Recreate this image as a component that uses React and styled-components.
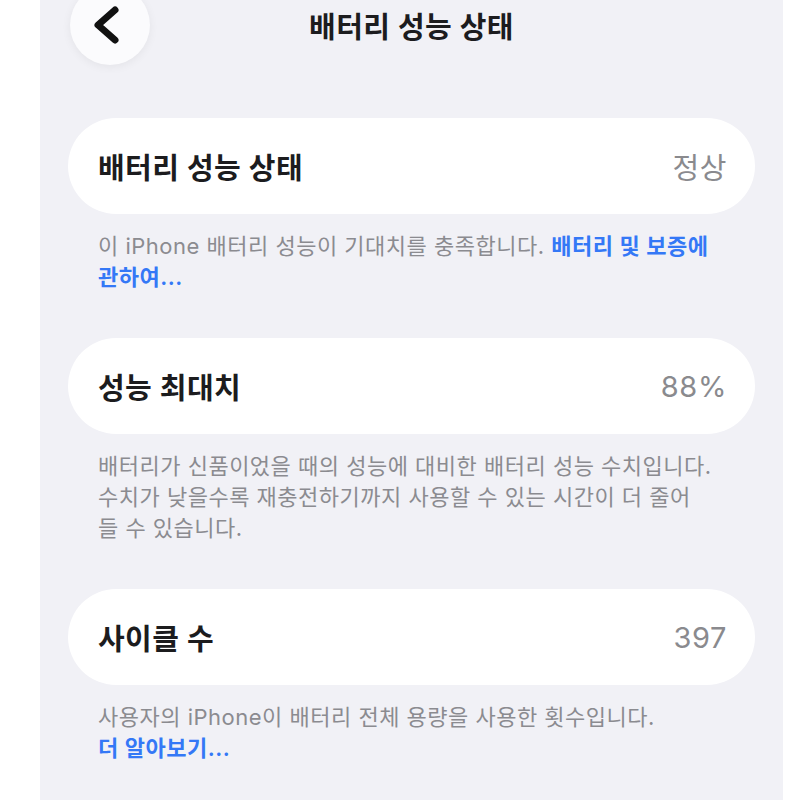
import React from 'react'
import styled, { createGlobalStyle } from 'styled-components'

const GlobalStyle = createGlobalStyle`
    html, body {
        margin: 0;
        padding: 0;
        background: #ffffff;
        overflow: hidden;
    }
    body {
        font-family: Inter, "Noto Sans CJK KR", sans-serif;
        -webkit-font-smoothing: antialiased;
    }
`

const Screen = styled.div`
    margin-left: 40px;
    width: 743px;
    height: 800px;
    background-color: #f1f1f6;
    overflow: hidden;
`

const NavBar = styled.header`
    margin-top: -15px;
    height: 80px;
    padding: 0 30px;
    display: grid;
    grid-template-columns: 1fr auto 1fr;
    align-items: center;
`

const BackButton = styled.button`
    width: 80px;
    height: 80px;
    border: none;
    border-radius: 50%;
    background-color: #fbfbfd;
    box-shadow: 0 2px 10px rgba(0, 0, 0, 0.06);
    padding: 0;
    display: block;
    cursor: pointer;
`

const NavTitle = styled.h1`
    margin: 0;
    font-size: 29px;
    font-weight: 700;
    color: #1c1c1e;
    letter-spacing: 0.5px;
`

const List = styled.main`
    padding: 53px 28px 0;
`

const Section = styled.section`
    margin-bottom: 45px;
`

const Row = styled.div`
    height: 96px;
    padding: 0 28px 0 30px;
    border-radius: 48px;
    background-color: #ffffff;
    display: flex;
    align-items: center;
    justify-content: space-between;
`

const Label = styled.span`
    font-size: 29px;
    font-weight: 600;
    color: #1c1c1e;
    letter-spacing: 0.4px;
`

const Value = styled.span`
    font-size: 29px;
    font-weight: 400;
    color: #8a8a8e;
    letter-spacing: 0.6px;
`

const Footnote = styled.p`
    margin: 0;
    padding: 17px 30px 0;
    font-size: 22px;
    line-height: 31px;
    color: #8b8b90;
    letter-spacing: 0.5px;
    white-space: nowrap;
`

const Link = styled.a`
    color: #3478f6;
    font-weight: 600;
    text-decoration: none;
`

// chevron drawn in the button's own 80x80 box
const ChevronLeft = () => (
    <svg width="80" height="80" viewBox="0 0 80 80">
        <path
            d="M45 25 L28 40 L45 55"
            fill="none"
            stroke="#111"
            strokeWidth="7"
            strokeLinecap="round"
            strokeLinejoin="round"
        />
    </svg>
)

const sections = [
    {
        label: '배터리 성능 상태',
        value: '정상',
        note: (
            <>
                이 iPhone 배터리 성능이 기대치를 충족합니다. <Link href="#">배터리 및 보증에</Link>
                <br />
                <Link href="#">관하여...</Link>
            </>
        ),
    },
    {
        label: '성능 최대치',
        value: '88%',
        note: (
            <>
                배터리가 신품이었을 때의 성능에 대비한 배터리 성능 수치입니다.
                <br />
                수치가 낮을수록 재충전하기까지 사용할 수 있는 시간이 더 줄어
                <br />
                들 수 있습니다.
            </>
        ),
    },
    {
        label: '사이클 수',
        value: '397',
        note: (
            <>
                사용자의 iPhone이 배터리 전체 용량을 사용한 횟수입니다.
                <br />
                <Link href="#">더 알아보기...</Link>
            </>
        ),
    },
]

const App = () => {
    return (
        <>
            <GlobalStyle />
            <Screen>
                <NavBar>
                    <div>
                        <BackButton aria-label="뒤로">
                            <ChevronLeft />
                        </BackButton>
                    </div>
                    <NavTitle>배터리 성능 상태</NavTitle>
                    <div />
                </NavBar>
                <List>
                    {sections.map((s) => (
                        <Section key={s.label}>
                            <Row>
                                <Label>{s.label}</Label>
                                <Value>{s.value}</Value>
                            </Row>
                            <Footnote>{s.note}</Footnote>
                        </Section>
                    ))}
                </List>
            </Screen>
        </>
    )
}

export default App
